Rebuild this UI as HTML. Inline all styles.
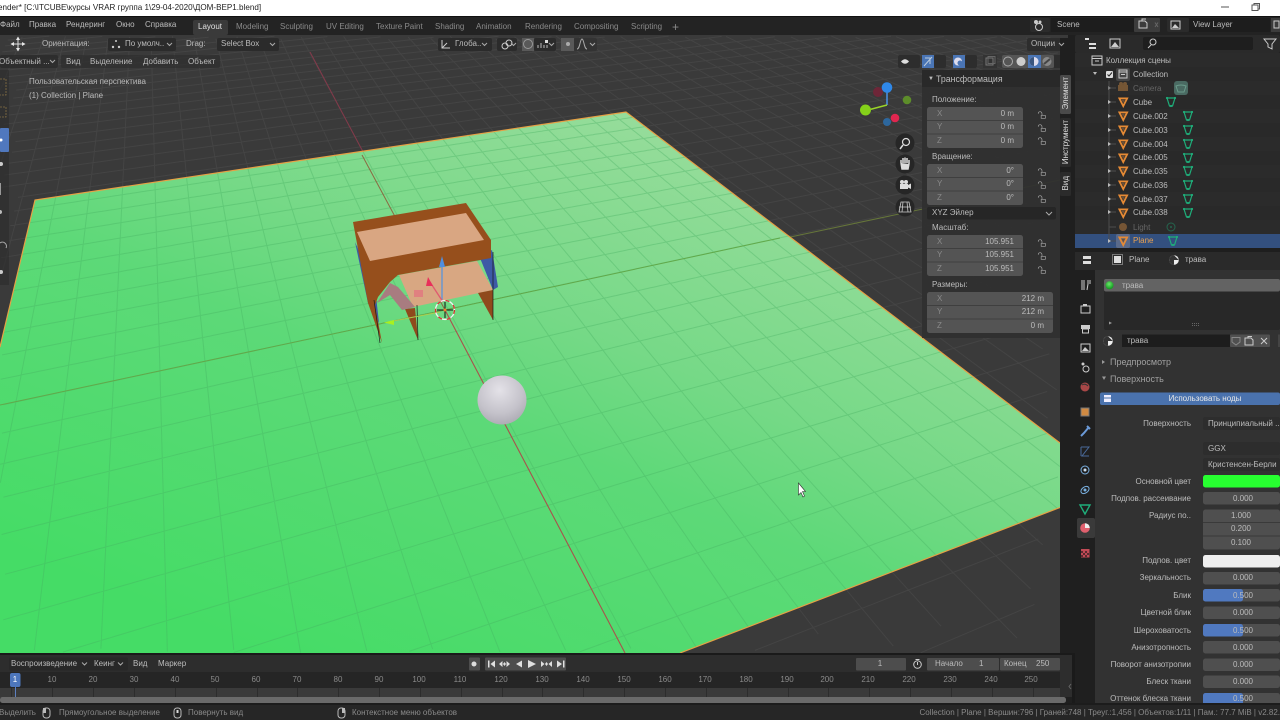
<!DOCTYPE html>
<html><head><meta charset="utf-8"><style>
html,body{margin:0;padding:0;background:#232323;width:1280px;height:720px;overflow:hidden}
svg{position:absolute;left:0;top:0}
#x{position:absolute;left:0;top:0;width:1280px;height:720px;overflow:hidden;font:8px "Liberation Sans","Noto Sans CJK SC",sans-serif;color:#bcbcbc;filter:blur(.3px)}
#x span{position:absolute;white-space:nowrap;line-height:0;height:0}
.d{color:#8a8a8a}.c{transform:translateX(-50%)}
#x .v{writing-mode:vertical-rl;transform:rotate(180deg);line-height:11px;height:auto}
</style></head><body>
<svg width="1280" height="720" viewBox="0 0 1280 720">
<defs>
<linearGradient id="pg" gradientUnits="userSpaceOnUse" x1="260" y1="650" x2="503" y2="69"><stop offset="0" stop-color="#45dc66"/><stop offset=".48" stop-color="#5dd978"/><stop offset=".67" stop-color="#76d987"/><stop offset="1" stop-color="#95dc9a"/></linearGradient>
<radialGradient id="sp" cx=".45" cy=".3" r=".8"><stop offset="0" stop-color="#e4e2e8"/><stop offset=".6" stop-color="#c4c2ca"/><stop offset="1" stop-color="#a5a3ac"/></radialGradient>
<radialGradient id="ball" cx=".45" cy=".35" r=".6"><stop offset="0" stop-color="#6be86a"/><stop offset="1" stop-color="#159c22"/></radialGradient>
<clipPath id="vp"><rect x="0" y="35" width="1060" height="618"/></clipPath>
<symbol id="tri" viewBox="0 0 12 12" overflow="visible"><path d="M1.500 1.500H10.500L6 10.500Z" fill="none" stroke="#e58a35" stroke-width="2"/><path d="M4 3.200H8L6 7.200Z" fill="#6b5038"/></symbol>
<symbol id="gt" viewBox="0 0 12 12" overflow="visible"><path d="M2 2H10L7.500 10H4.500Z" fill="none" stroke="#1fae7a" stroke-width="1.200"/><circle cx="2" cy="2" r="1.100" fill="#1fae7a"/><circle cx="10" cy="2" r="1.100" fill="#1fae7a"/><circle cx="6" cy="10" r="1.100" fill="#1fae7a"/></symbol>
<symbol id="lock" viewBox="0 0 12 12" overflow="visible"><path d="M1.500 4.500C1.500 1.500 5.500 1 6 4.500V6M5 6.500H10V10H5Z" fill="none" stroke="#a8a8a8" stroke-width=".8"/></symbol>
</defs>
<rect width="1280" height="720" fill="#1f1f1f"/>
<g clip-path="url(#vp)">
<rect x="0" y="35" width="1060" height="618" fill="#3a3a3a"/>
<g id="floor" fill="none" stroke="#444" stroke-width="1"></g>
<path d="M310 52L447 310" stroke="#84394a" stroke-width="1" fill="none"/>
<path d="M1060 180L445 310" stroke="#66763a" stroke-width="1" fill="none"/>
<path d="M35 200L626 112L1060 443V507.500L680 653H0V347Z" fill="url(#pg)"/>
<g id="plane" fill="none" stroke="#46b060" stroke-opacity=".36" stroke-width="1"></g>
<path d="M445 310L625 653" stroke="#a8524c" stroke-width="1.100"/>
<path d="M362 155L445 310" stroke="#8a6a42" stroke-width="1"/>
<path d="M0 405L445 310L780 238" stroke="#62a94a" stroke-width="1"/>
<path d="M0 347L35 200L626 112L1060 443M1060 507.500L680 653" fill="none" stroke="#e6a045" stroke-width="1.200"/>
<!-- house -->
<path d="M355 242L375 287L379 323L368 303Z" fill="#3d59a6"/>
<path d="M480 258L492 250L498 287L493 290Z" fill="#3d59a6"/>
<path d="M399 275L477 261L493 290L413 307Z" fill="#d8a782"/>
<path d="M478 293L493 290L493 320Z" fill="#8f4a1c"/>
<path d="M405 309L415 308L418 340Z" fill="#8f4a1c"/>
<path d="M377 303L390 283L398 287L415 307L402 310L390 295Z" fill="#a87c80"/>
<path d="M414 290H423V297H414Z" fill="#e08080"/>
<path d="M353 222L466 203L491 240V258L398 275L390 282L378 297L375 305L382 343L368 303Z" fill="#964f1c"/>
<path d="M357 232L466 213L484 240L370 261Z" fill="#d9a682"/>
<path d="M374 300L380 343M417 305L418 340M493 252V320" stroke="#1a1a1a" stroke-width=".7" fill="none"/>
<path d="M442 300V262" stroke="#5b95dc" stroke-width="1.300"/><path d="M442 256L445 267H439Z" fill="#4f8fe0"/>
<path d="M443 302L430 282" stroke="#e05a70" stroke-width="1.300"/><path d="M428 277L433 286L426 286Z" fill="#e8305a"/>
<path d="M440 312L388 322" stroke="#a9cf50" stroke-width="1"/><path d="M384 322.500L394 320L394 325Z" fill="#a8f020"/>
<circle cx="445" cy="310" r="9.500" fill="none" stroke="#f4f4f4" stroke-width="1.300"/><circle cx="445" cy="310" r="9.500" fill="none" stroke="#d83030" stroke-width="1.300" stroke-dasharray="4 5"/>
<path d="M445 302V318M437 310H453" stroke="#111" stroke-width="1"/><circle cx="445" cy="310" r="1.500" fill="#f08030"/>
<circle cx="502" cy="400" r="24.500" fill="url(#sp)"/>
<path d="M798.500 483L798.500 495L801 492.500L803 497L804.500 496L802.500 491.500L805.500 491.500Z" fill="#fff" stroke="#333" stroke-width=".6"/>
<!-- left tool strip -->
<rect x="0" y="70" width="9" height="215" fill="#2a2a2a" opacity=".55"/>
<rect x="0" y="128" width="9" height="24" rx="1" fill="#5078be"/>
<path d="M0 79H6V95H0M0 107H6V117H0" fill="none" stroke="#c09a50" stroke-width=".8" opacity=".6" stroke-dasharray="2 1"/>
<circle cx="1" cy="140" r="1.500" fill="#fff"/><circle cx="1" cy="164" r="2" fill="#ccc"/><rect x="0" y="183" width="1" height="12" fill="#999"/><circle cx="0" cy="212" r="2" fill="#bbb"/><path d="M0 243A4 4 0 0 1 6 248" stroke="#aaa" fill="none"/><circle cx="1" cy="272" r="2" fill="#ccc"/>
<!-- tool header -->
<rect x="108" y="38" width="68" height="13" rx="2" fill="#2b2b2b"/><rect x="217" y="38" width="62" height="13" rx="2" fill="#2b2b2b"/>
<rect x="0" y="55" width="58" height="13" rx="2" fill="#2b2b2b" opacity=".8"/><rect x="61" y="55" width="159" height="13" rx="2" fill="#2f2f2f" opacity=".75"/>
<rect x="438" y="38" width="54" height="13" rx="2" fill="#2b2b2b"/><rect x="497" y="38" width="20" height="13" rx="2" fill="#2b2b2b"/><rect x="522" y="38" width="12" height="13" fill="#595959"/><rect x="534" y="38" width="22" height="13" rx="2" fill="#2b2b2b"/><rect x="561" y="38" width="13" height="13" fill="#595959"/><rect x="574" y="38" width="23" height="13" rx="2" fill="#333"/>
<path d="M18 37V51M11 44H25" stroke="#ddd" stroke-width="1"/><path d="M18 36.500L20 40H16ZM18 51.500L20 48H16ZM10.500 44L14 42V46ZM25.500 44L22 42V46Z" fill="#e6e6e6"/>
<circle cx="116" cy="41" r="1" fill="#ccc"/><circle cx="113" cy="47" r="1.200" fill="#ccc"/><circle cx="119" cy="47" r="1.200" fill="#ccc"/>
<path d="M442 40V48H450M442 48L447 43" stroke="#ccc" fill="none"/><circle cx="505" cy="46" r="3" fill="none" stroke="#ccc"/><circle cx="509" cy="43" r="3" fill="none" stroke="#ccc"/>
<circle cx="528" cy="44" r="4.500" fill="none" stroke="#999"/><path d="M538 48V45M541 48V43M544 48V45M547 48V45" stroke="#bbb"/><rect x="545" y="40" width="3" height="3" fill="#ddd"/>
<circle cx="568" cy="44" r="2" fill="#aaa"/><path d="M577 49C580 49 580 39 582 39S584 49 587 49" stroke="#aaa" fill="none"/>
<rect x="1027" y="38" width="41" height="13" rx="2" fill="#2d2d2d"/>
<path d="M167 43L169.500 45.500L172 43M270 43L272.500 45.500L275 43M482 43L484.500 45.500L487 43M511 43L513.500 45.500L516 43M549 43L551.500 45.500L554 43M590 43L592.500 45.500L595 43M50 60L52.500 62.500L55 60M910 60L912.500 62.500L915 60M939 60L941.500 62.500L944 60M969 60L971.500 62.500L974 60" fill="none" stroke="#aaa" stroke-width="1"/>
<!-- overlay header -->
<rect x="898" y="55" width="22" height="13" rx="2" fill="#2d2d2d"/><rect x="922" y="55" width="12" height="13" fill="#4a75b5"/><rect x="934" y="55" width="12" height="13" rx="2" fill="#2d2d2d"/><rect x="953" y="55" width="12" height="13" fill="#4a75b5"/><rect x="965" y="55" width="12" height="13" rx="2" fill="#2d2d2d"/><rect x="983" y="55" width="14" height="13" fill="#333"/><rect x="1002" y="55" width="52" height="13" rx="2" fill="#555"/><rect x="1028" y="55" width="13" height="13" fill="#4a75b5"/><rect x="1054" y="55" width="6" height="13" fill="#2d2d2d"/>
<path d="M901 61.500Q905 57 909 61.500Q905 66 901 61.500Z" fill="#ddd"/>
<path d="M924 66L932 57M925 58H930V64" stroke="#bcd" fill="none"/><circle cx="958" cy="61.500" r="4" fill="#dde"/><circle cx="960" cy="63" r="2.500" fill="#4a75b5"/>
<rect x="986" y="58" width="7" height="7" fill="none" stroke="#777"/><rect x="988" y="56.500" width="7" height="7" fill="none" stroke="#666"/>
<circle cx="1008" cy="61.500" r="4.500" fill="#555" stroke="#aaa"/><circle cx="1021" cy="61.500" r="4.500" fill="#ccc"/><circle cx="1034" cy="61.500" r="4.500" fill="#dde"/><path d="M1034 57A4.500 4.500 0 0 0 1034 66Z" fill="#39557f"/><circle cx="1047" cy="61.500" r="4.500" fill="#888"/><path d="M1044 64L1050 59" stroke="#444" stroke-width="2"/>
<!-- nav gizmo -->
<path d="M887 105V90" stroke="#4a92e8" stroke-width="1.500"/><path d="M887 105L868 110" stroke="#9ad428" stroke-width="1.500"/>
<circle cx="878" cy="92" r="5" fill="#6e2638"/><circle cx="887" cy="87.500" r="5.300" fill="#2f88e8"/><circle cx="865.500" cy="110" r="5.500" fill="#85d11a"/><circle cx="907" cy="100" r="4.300" fill="#5d8d2a"/><circle cx="895" cy="118" r="4.300" fill="#e0264f"/><circle cx="887" cy="122" r="4" fill="#2d679d"/>
<g fill="#262626"><circle cx="905" cy="143" r="9.500"/><circle cx="905" cy="164" r="9.500"/><circle cx="905" cy="185" r="9.500"/><circle cx="905" cy="207" r="9.500"/></g>
<circle cx="906" cy="142" r="3.500" fill="none" stroke="#ddd" stroke-width="1.200"/><path d="M903 145L900 149" stroke="#ddd" stroke-width="1.500"/>
<path d="M901 163V160M903 163V158M905 163V157.500M907 163V158M909 164V160M901 163L902 169H908L909 164" stroke="#ddd" stroke-width="1.500" fill="#ddd"/>
<rect x="900" y="184" width="8" height="5" fill="#ddd"/><circle cx="902" cy="182" r="2" fill="#ddd"/><circle cx="906" cy="182" r="2" fill="#ddd"/><path d="M908 185L911 183.500V189L908 187.500Z" fill="#ddd"/>
<path d="M901 202H909L911 212H899ZM899 207H911M903 202L902 212M907 202L908 212" fill="none" stroke="#ccc" stroke-width=".8"/>
<!-- N panel -->
<rect x="922" y="70" width="138" height="268" fill="#2f2f2f" opacity=".93"/>
<rect x="922" y="70" width="138" height="17" fill="#292929"/>
</g>
<g fill="#545454">
<rect x="927" y="107" width="96" height="41" rx="2.500"/><rect x="927" y="164" width="96" height="41" rx="2.500"/><rect x="927" y="235" width="96" height="41" rx="2.500"/><rect x="927" y="292" width="126" height="41" rx="2.500"/>
</g>
<path d="M927 120.500H1023M927 134H1023M927 177.500H1023M927 191H1023M927 248.500H1023M927 262H1023M927 305.500H1053M927 319H1053" stroke="#3f3f3f" stroke-width="1"/>
<rect x="927" y="207" width="129" height="12.500" rx="2" fill="#262626"/>
<path d="M1046 212L1049 215L1052 212" fill="none" stroke="#aaa"/>
<g><use href="#lock" x="1037" y="110" width="10" height="10"/><use href="#lock" x="1037" y="123" width="10" height="10"/><use href="#lock" x="1037" y="136" width="10" height="10"/><use href="#lock" x="1037" y="167" width="10" height="10"/><use href="#lock" x="1037" y="180" width="10" height="10"/><use href="#lock" x="1037" y="194" width="10" height="10"/><use href="#lock" x="1037" y="238" width="10" height="10"/><use href="#lock" x="1037" y="251" width="10" height="10"/><use href="#lock" x="1037" y="265" width="10" height="10"/></g>
<!-- N tabs -->
<rect x="1060" y="53" width="12" height="600" fill="#1f1f1f"/>
<rect x="1060" y="75" width="11" height="39" rx="1.500" fill="#4a4a4a"/><rect x="1060" y="118" width="11" height="49" rx="1.500" fill="#2b2b2b"/><rect x="1060" y="172" width="11" height="24" rx="1.500" fill="#2b2b2b"/>
<path d="M1059 43L1061.500 45.500L1064 43" fill="none" stroke="#aaa" stroke-width="1"/>
<rect x="1060" y="35" width="12" height="3" fill="#3a3a3a"/><rect x="1068" y="35" width="7" height="18" fill="#1f1f1f"/>
<!-- top -->
<rect x="0" y="0" width="1280" height="16" fill="#fff"/><rect x="0" y="16" width="1280" height="1" fill="#111"/>
<rect x="0" y="17" width="1280" height="18" fill="#232323"/>
<rect x="193" y="20" width="35" height="15" rx="2" fill="#3a3a3a"/>
<path d="M1221 7H1229" stroke="#555"/><path d="M1252 5H1258V10.500H1252ZM1254 5V3.500H1259.500V9H1258" fill="none" stroke="#555"/>
<rect x="1030" y="18" width="20" height="14" rx="2" fill="#2b2b2b"/><rect x="1051" y="18" width="83" height="14" fill="#1d1d1d"/><rect x="1134" y="18" width="26" height="14" rx="1" fill="#3c3c3c"/><rect x="1167" y="18" width="22" height="14" rx="2" fill="#2b2b2b"/><rect x="1189" y="18" width="81" height="14" fill="#1d1d1d"/><rect x="1271" y="18" width="9" height="14" fill="#3c3c3c"/>
<circle cx="1039" cy="27" r="3.500" fill="none" stroke="#ccc"/><circle cx="1036" cy="22" r="2" fill="#ccc"/><circle cx="1040" cy="22" r="1.500" fill="#ccc"/>
<path d="M1139 21H1145L1147 23V28H1139ZM1142 21V19H1146" fill="none" stroke="#ccc"/><path d="M1155 22.500L1158 27M1158 22.500L1155 27" stroke="#666"/>
<rect x="1171" y="21" width="9" height="8" fill="none" stroke="#ccc"/><path d="M1172 28L1175 24L1179 28Z" fill="#ccc"/><path d="M1274 21H1279V28H1274Z" fill="none" stroke="#ccc"/>
<!-- outliner -->
<rect x="1075" y="35" width="205" height="18" fill="#2a2a2a" rx="2"/>
<rect x="1075" y="53" width="205" height="195" fill="#2b2b2b"/>
<g fill="#292929"><rect x="1075" y="67" width="205" height="14"/><rect x="1075" y="95" width="205" height="14"/><rect x="1075" y="123" width="205" height="14"/><rect x="1075" y="151" width="205" height="14"/><rect x="1075" y="178" width="205" height="14"/><rect x="1075" y="206" width="205" height="14"/></g>
<rect x="1075" y="234" width="205" height="14" fill="#33507f"/>
<rect x="1143" y="37" width="110" height="13" rx="2" fill="#1e1e1e"/>
<path d="M1085 38H1089V40H1085ZM1089 43H1096V45H1089ZM1089 47H1096V49H1089" fill="#ddd"/><rect x="1110" y="39" width="10" height="9" fill="none" stroke="#ccc"/><path d="M1111 47L1115 42L1119 47Z" fill="#ccc"/>
<circle cx="1153" cy="42" r="3" fill="none" stroke="#ccc"/><path d="M1151 45L1148 48" stroke="#ccc"/><path d="M1264 39H1276L1272 44V49L1268 47V44Z" fill="none" stroke="#ccc"/>
<rect x="1092" y="56" width="10" height="9" fill="none" stroke="#ccc"/><path d="M1092 58.500H1102M1095 61H1099" stroke="#ccc"/>
<path d="M1095 73L1099 73L1097 76Z" fill="#bbb" transform="translate(-2 -1)"/><rect x="1106" y="71" width="7" height="7" rx="1" fill="#ddd"/><path d="M1107.500 74.500L1109 76L1112 72.500" stroke="#222" fill="none"/>
<rect x="1116" y="68" width="14" height="13" rx="2" fill="#444"/><rect x="1119" y="70" width="8" height="8" fill="none" stroke="#ccc"/><path d="M1119 72H1127M1121 74.500H1125" stroke="#ccc"/>
<path d="M1109 81V241M1109 88H1116M1109 102H1116M1109 116H1116M1109 130H1116M1109 144H1116M1109 157H1116M1109 171H1116M1109 185H1116M1109 199H1116M1109 212H1116M1109 227H1116M1109 241H1116" stroke="#4d4d4d" stroke-width="1"/>
<g fill="#bbb"><path d="M1108 100L1111 102L1108 104Z"/><path d="M1108 114L1111 116L1108 118Z"/><path d="M1108 128L1111 130L1108 132Z"/><path d="M1108 142L1111 144L1108 146Z"/><path d="M1108 155L1111 157L1108 159Z"/><path d="M1108 169L1111 171L1108 173Z"/><path d="M1108 183L1111 185L1108 187Z"/><path d="M1108 197L1111 199L1108 201Z"/><path d="M1108 210L1111 212L1108 214Z"/><path d="M1108 239L1111 241L1108 243Z"/><path d="M1108 86L1111 88L1108 90Z" opacity=".5"/></g>
<g opacity=".45"><rect x="1118" y="85" width="10" height="6" fill="#d08a42"/><circle cx="1121" cy="84" r="2" fill="#d08a42"/><circle cx="1125" cy="84" r="2" fill="#d08a42"/></g>
<rect x="1174" y="81" width="14" height="14" rx="3" fill="#4a6a62"/><path d="M1176 86Q1181 84 1186 86L1184 92H1178Z" fill="none" stroke="#6a9a8a"/>
<g><use href="#tri" x="1118" y="97" width="10.500" height="10.500"/><use href="#tri" x="1118" y="111" width="10.500" height="10.500"/><use href="#tri" x="1118" y="125" width="10.500" height="10.500"/><use href="#tri" x="1118" y="139" width="10.500" height="10.500"/><use href="#tri" x="1118" y="153" width="10.500" height="10.500"/><use href="#tri" x="1118" y="166" width="10.500" height="10.500"/><use href="#tri" x="1118" y="180" width="10.500" height="10.500"/><use href="#tri" x="1118" y="194" width="10.500" height="10.500"/><use href="#tri" x="1118" y="208" width="10.500" height="10.500"/></g>
<rect x="1116" y="234" width="14" height="14" rx="2" fill="#5a6a8a"/><use href="#tri" x="1118" y="236" width="10.500" height="10.500"/>
<circle cx="1123" cy="227" r="4" fill="#d08a42" opacity=".45"/><circle cx="1171" cy="227" r="4" fill="none" stroke="#1fae7a" opacity=".45"/><circle cx="1171" cy="227" r="1" fill="#1fae7a" opacity=".45"/>
<g><use href="#gt" x="1165" y="96" width="12" height="12"/><use href="#gt" x="1182" y="110" width="12" height="12"/><use href="#gt" x="1182" y="124" width="12" height="12"/><use href="#gt" x="1182" y="138" width="12" height="12"/><use href="#gt" x="1182" y="152" width="12" height="12"/><use href="#gt" x="1182" y="165" width="12" height="12"/><use href="#gt" x="1182" y="179" width="12" height="12"/><use href="#gt" x="1182" y="193" width="12" height="12"/><use href="#gt" x="1182" y="207" width="12" height="12"/><use href="#gt" x="1167" y="235" width="12" height="12"/></g>
<rect x="1075" y="248" width="205" height="4" fill="#1e1e1e"/>
<!-- properties -->
<rect x="1075" y="252" width="205" height="18" fill="#2a2a2a"/>
<rect x="1075" y="270" width="20" height="435" fill="#1f1f1f"/>
<rect x="1095" y="270" width="185" height="435" fill="#323232"/>
<path d="M1083 256H1091V259H1083ZM1083 261H1091V264H1083Z" fill="#ddd"/>
<rect x="1114" y="256" width="7" height="7" fill="#ddd"/><rect x="1112.500" y="254.500" width="10" height="10" fill="none" stroke="#777"/>
<circle cx="1174" cy="260" r="4.800" fill="#eee"/><path d="M1174 255.200A4.800 4.800 0 0 0 1174 264.800L1174 260L1178.800 260Z" fill="#333"/>
<rect x="1104" y="279" width="176" height="51" rx="2" fill="#282828"/>
<rect x="1104" y="279" width="176" height="12.500" rx="2" fill="#636363"/>
<circle cx="1109.500" cy="285.300" r="4" fill="url(#ball)"/>
<path d="M1109 321.500L1112 323L1109 324.500Z" fill="#999"/><path d="M1192 323.500H1200M1192 325.500H1200" stroke="#666" stroke-dasharray="1 1"/>
<circle cx="1108" cy="341" r="4.800" fill="#eee"/><path d="M1108 336.200A4.800 4.800 0 0 0 1108 345.800L1108 341L1112.800 341Z" fill="#333"/>
<rect x="1122" y="334.500" width="108" height="12.500" fill="#1d1d1d"/><rect x="1230" y="334.500" width="40" height="12.500" rx="1" fill="#505050"/><rect x="1278" y="334.500" width="2" height="12.500" fill="#444"/>
<path d="M1232 337.500H1240V342L1236 345L1232 342Z" fill="none" stroke="#888"/><path d="M1245 338H1251L1253 340V345H1245ZM1248 338V336.500H1252" fill="none" stroke="#ccc"/><path d="M1261 338L1267 344M1267 338L1261 344" stroke="#ccc"/>
<path d="M1102 360L1105 362L1102 364Z" fill="#999"/><path d="M1102 376.500L1106 376.500L1104 380Z" fill="#999"/>
<rect x="1100" y="392.500" width="180" height="12.500" rx="2" fill="#4a72ad"/><rect x="1104" y="395" width="7" height="7" fill="#eef"/><path d="M1104 398H1111" stroke="#4a72ad"/>
<g fill="#2d2d2d"><rect x="1203" y="417" width="77" height="13" rx="2"/><rect x="1203" y="442" width="77" height="13" rx="2"/><rect x="1203" y="458" width="77" height="13" rx="2"/></g>
<rect x="1203" y="475" width="77" height="12.500" rx="2.500" fill="#27ff30"/>
<g fill="#4f4f4f"><rect x="1203" y="492" width="77" height="12.500" rx="2.500"/><rect x="1203" y="509.500" width="77" height="40" rx="2.500"/><rect x="1203" y="572" width="77" height="12.500" rx="2.500"/><rect x="1203" y="589" width="77" height="12.500" rx="2.500"/><rect x="1203" y="606.500" width="77" height="12.500" rx="2.500"/><rect x="1203" y="624" width="77" height="12.500" rx="2.500"/><rect x="1203" y="641" width="77" height="12.500" rx="2.500"/><rect x="1203" y="658.500" width="77" height="12.500" rx="2.500"/><rect x="1203" y="675.500" width="77" height="12.500" rx="2.500"/><rect x="1203" y="693" width="77" height="12" rx="2.500"/></g>
<path d="M1203 522.500H1280M1203 536H1280" stroke="#3a3a3a"/>
<rect x="1203" y="555" width="77" height="12.500" rx="2.500" fill="#eee"/>
<g fill="#5079c0"><rect x="1203" y="589" width="40" height="12.500" rx="2.500"/><rect x="1203" y="624" width="40" height="12.500" rx="2.500"/><rect x="1203" y="693" width="40" height="12" rx="2.500"/></g>
<!-- prop tabs -->
<rect x="1077" y="518" width="18" height="20" rx="2" fill="#3a3a3a"/>
<path d="M1082 280V290M1084 280V290M1088 280V284L1087 290M1090 280V284" stroke="#ccc" fill="none"/>
<rect x="1081" y="306" width="9" height="7" fill="none" stroke="#ccc"/><rect x="1083" y="304" width="4" height="2" fill="#ccc"/>
<rect x="1081" y="325" width="9" height="4" fill="#ccc"/><rect x="1082.500" y="329" width="6" height="4" fill="none" stroke="#ccc"/>
<rect x="1081" y="344" width="9" height="8" fill="none" stroke="#ccc"/><path d="M1082 351L1085 347L1089 351Z" fill="#ccc"/>
<circle cx="1086" cy="369" r="3" fill="none" stroke="#ccc"/><circle cx="1083" cy="364" r="1.500" fill="#ccc"/>
<circle cx="1085" cy="387" r="4.500" fill="#a84747"/><path d="M1082 385Q1085 383 1088 386" stroke="#333" fill="none"/>
<rect x="1081" y="408" width="8" height="8" fill="#d08a42" stroke="#777"/>
<path d="M1089 427L1084 433L1081 436M1087 426L1090 429" stroke="#6b9ad8" stroke-width="2" fill="none"/>
<path d="M1081 447L1089 447L1082 456L1089 456M1081 447V456" stroke="#4a6a9a" fill="none"/>
<circle cx="1085" cy="470" r="4" fill="none" stroke="#7ab0e0"/><circle cx="1085" cy="470" r="1.500" fill="#cde"/>
<ellipse cx="1085" cy="490" rx="4.500" ry="3" fill="none" stroke="#7ab0e0" transform="rotate(-35 1085 490)"/><circle cx="1085" cy="490" r="1.500" fill="#7ab0e0"/>
<path d="M1080 505H1090L1085 514Z" fill="none" stroke="#1fae7a" stroke-width="1.400"/>
<circle cx="1085" cy="528" r="4.800" fill="#e0606e"/><path d="M1085 523.200A4.800 4.800 0 0 1 1089.800 528L1085 528Z" fill="#eee"/>
<rect x="1081" y="549" width="8.500" height="8.500" fill="#c04a55"/><path d="M1081 551H1083V553H1081ZM1085 551H1087V553H1085ZM1083 553H1085V555H1083ZM1087 553H1089V555H1087ZM1081 555H1083V557H1081ZM1085 555H1087V557H1085Z" fill="#5a2a30"/>
<!-- timeline -->
<rect x="0" y="653" width="1072" height="2" fill="#1a1a1a"/>
<rect x="0" y="655" width="1060" height="17" fill="#2d2d2d"/><rect x="0" y="672" width="1060" height="16" fill="#252525"/><rect x="0" y="688" width="1060" height="10" fill="#3a3a3a"/>
<rect x="0" y="697" width="1066" height="6" rx="2.500" fill="#6a6a6a"/>
<rect x="1060" y="655" width="12" height="42" fill="#2d2d2d"/>
<rect x="1072" y="653" width="3" height="52" fill="#1a1a1a"/>
<path d="M1071 684L1069 686.500L1071 689" stroke="#666" fill="none"/>
<rect x="9" y="657.500" width="119" height="13" rx="2" fill="#282828"/>
<path d="M82 662.500L84.500 665L87 662.500M118 662.500L120.500 665L123 662.500" fill="none" stroke="#aaa"/>
<rect x="469" y="657.500" width="11" height="13" rx="1" fill="#4d4d4d"/><rect x="485" y="657.500" width="81" height="13" rx="1" fill="#4d4d4d"/>
<circle cx="474" cy="664" r="2.500" fill="#ddd"/>
<g fill="#e0e0e0"><path d="M488 660.500H489.500V667.500H488ZM495 660.500V667.500L490.500 664Z"/><path d="M499 664L502.500 661V667ZM510 664L506.500 661V667ZM503 664L504.500 662L506 664L504.500 666Z"/><path d="M522 660.500V667.500L516 664Z"/><path d="M528 660V668L536 664Z"/><path d="M541 661V667L544.500 664ZM552 661V667L548.500 664ZM545 664L546.500 662L548 664L546.500 666Z"/><path d="M557 660.500V667.500L562 664ZM563 660.500H564.500V667.500H563Z"/></g>
<rect x="856" y="658" width="50" height="12.500" rx="1" fill="#4d4d4d"/><rect x="927" y="658" width="72" height="12.500" rx="1" fill="#4d4d4d"/><rect x="1000" y="658" width="60" height="12.500" rx="1" fill="#4d4d4d"/>
<circle cx="917.500" cy="664.500" r="3.800" fill="none" stroke="#ccc"/><path d="M915.500 659.500H919.500M917.500 662V665" stroke="#ccc"/>
<path id="tk" d="" stroke="#2c2c2c" stroke-width="1"/>
<rect x="10" y="673" width="10.500" height="14" rx="2" fill="#4d76bb"/><path d="M15.500 687V697" stroke="#5d80c0" stroke-width="1"/>
<rect x="0" y="703" width="1280" height="2" fill="#1c1c1c"/>
<rect x="0" y="705" width="1280" height="15" fill="#262626"/>
<rect x="43" y="708" width="7" height="10" rx="3" fill="none" stroke="#bbb"/><rect x="174" y="708" width="7" height="10" rx="3" fill="none" stroke="#bbb"/><rect x="338" y="708" width="7" height="10" rx="3" fill="none" stroke="#bbb"/>
<rect x="176.500" y="710" width="2" height="3" fill="#ddd"/><rect x="43" y="708" width="3" height="5" fill="#bbb"/><rect x="342" y="708" width="3" height="5" fill="#bbb"/>
</svg>
<div id="x">
<span style="left:-2px;top:8px;color:#222;font-size:8.100px">ender* [C:\ITCUBE\курсы VRAR группа 1\29-04-2020\ДОМ-ВЕР1.blend]</span>
<span style="left:0;top:25px">Файл</span><span style="left:29px;top:25px">Правка</span><span style="left:66px;top:25px">Рендеринг</span><span style="left:116px;top:25px">Окно</span><span style="left:145px;top:25px">Справка</span>
<span style="left:198px;top:27px;color:#e0e0e0">Layout</span><span class="d" style="left:236px;top:27px">Modeling</span><span class="d" style="left:280px;top:27px">Sculpting</span><span class="d" style="left:326px;top:27px">UV Editing</span><span class="d" style="left:376px;top:27px">Texture Paint</span><span class="d" style="left:435px;top:27px">Shading</span><span class="d" style="left:476px;top:27px">Animation</span><span class="d" style="left:525px;top:27px">Rendering</span><span class="d" style="left:574px;top:27px">Compositing</span><span class="d" style="left:631px;top:27px">Scripting</span><span class="d" style="left:672px;top:27px;font-size:12px">+</span>
<span style="left:1057px;top:25px">Scene</span><span style="left:1193px;top:25px">View Layer</span>
<span style="left:42px;top:44px">Ориентация:</span><span style="left:125px;top:44px">По умолч..</span><span style="left:186px;top:44px">Drag:</span><span style="left:221px;top:44px">Select Box</span><span style="left:455px;top:44px">Глоба..</span><span style="left:1031px;top:44px">Опции</span>
<span style="left:-1px;top:62px">Объектный ...</span><span style="left:66px;top:62px">Вид</span><span style="left:90px;top:62px">Выделение</span><span style="left:143px;top:62px">Добавить</span><span style="left:188px;top:62px">Объект</span>
<span style="left:29px;top:82px">Пользовательская перспектива</span><span style="left:29px;top:96px">(1) Collection | Plane</span>
<span style="left:936px;top:79px;font-size:8.800px">Трансформация</span><span style="left:928px;top:79px;font-size:6px">▼</span>
<span style="left:932px;top:100px">Положение:</span><span style="left:932px;top:157px">Вращение:</span><span style="left:932px;top:213px">XYZ Эйлер</span><span style="left:932px;top:228px">Масштаб:</span><span style="left:932px;top:285px">Размеры:</span>
<span class="d" style="left:937px;top:114px">X</span><span class="d" style="left:937px;top:127px">Y</span><span class="d" style="left:937px;top:141px">Z</span><span class="d" style="left:937px;top:171px">X</span><span class="d" style="left:937px;top:184px">Y</span><span class="d" style="left:937px;top:198px">Z</span><span class="d" style="left:937px;top:242px">X</span><span class="d" style="left:937px;top:255px">Y</span><span class="d" style="left:937px;top:269px">Z</span><span class="d" style="left:937px;top:299px">X</span><span class="d" style="left:937px;top:312px">Y</span><span class="d" style="left:937px;top:326px">Z</span>
<span style="right:266px;top:114px">0 m</span><span style="right:266px;top:127px">0 m</span><span style="right:266px;top:141px">0 m</span><span style="right:266px;top:171px">0°</span><span style="right:266px;top:184px">0°</span><span style="right:266px;top:198px">0°</span><span style="right:266px;top:242px">105.951</span><span style="right:266px;top:255px">105.951</span><span style="right:266px;top:269px">105.951</span><span style="right:236px;top:299px">212 m</span><span style="right:236px;top:312px">212 m</span><span style="right:236px;top:326px">0 m</span>
<span class="v" style="left:1060px;top:77px;color:#ddd">Элемент</span><span class="v" style="left:1060px;top:120px;color:#ddd">Инструмент</span><span class="v" style="left:1060px;top:176px;color:#ddd">Вид</span>
<span style="left:1106px;top:61px">Коллекция сцены</span><span style="left:1133px;top:75px">Collection</span><span style="left:1133px;top:89px;color:#666">Camera</span><span style="left:1133px;top:103px">Cube</span><span style="left:1133px;top:117px">Cube.002</span><span style="left:1133px;top:131px">Cube.003</span><span style="left:1133px;top:145px">Cube.004</span><span style="left:1133px;top:158px">Cube.005</span><span style="left:1133px;top:172px">Cube.035</span><span style="left:1133px;top:186px">Cube.036</span><span style="left:1133px;top:200px">Cube.037</span><span style="left:1133px;top:213px">Cube.038</span><span style="left:1133px;top:228px;color:#666">Light</span><span style="left:1133px;top:241px;color:#e8a050">Plane</span>
<span style="left:1129px;top:260px">Plane</span><span style="left:1185px;top:260px">трава</span>
<span style="left:1122px;top:286px">трава</span><span style="left:1127px;top:341px">трава</span>
<span style="left:1110px;top:362px;font-size:9px;color:#a0a0a0">Предпросмотр</span><span style="left:1110px;top:379px;font-size:9px;color:#a0a0a0">Поверхность</span>
<span class="c" style="left:1205px;top:399px;color:#e8e8e8">Использовать ноды</span>
<span style="right:89px;top:424px">Поверхность</span><span style="left:1208px;top:424px">Принципиальный ..</span><span style="left:1208px;top:449px">GGX</span><span style="left:1208px;top:465px">Кристенсен-Берли</span>
<span style="right:89px;top:482px">Основной цвет</span><span style="right:89px;top:499px">Подпов. рассеивание</span><span style="right:89px;top:516px">Радиус по..</span><span style="right:89px;top:561px">Подпов. цвет</span><span style="right:89px;top:578px">Зеркальность</span><span style="right:89px;top:596px">Блик</span><span style="right:89px;top:613px">Цветной блик</span><span style="right:89px;top:631px">Шероховатость</span><span style="right:89px;top:648px">Анизотропность</span><span style="right:89px;top:665px">Поворот анизотропии</span><span style="right:89px;top:682px">Блеск ткани</span><span style="right:89px;top:699px">Оттенок блеска ткани</span>
<span class="c" style="left:1243px;top:499px">0.000</span><span class="c" style="left:1241px;top:516px">1.000</span><span class="c" style="left:1241px;top:529px">0.200</span><span class="c" style="left:1241px;top:543px">0.100</span><span class="c" style="left:1243px;top:578px">0.000</span><span class="c" style="left:1243px;top:596px">0.500</span><span class="c" style="left:1243px;top:613px">0.000</span><span class="c" style="left:1243px;top:631px">0.500</span><span class="c" style="left:1243px;top:648px">0.000</span><span class="c" style="left:1243px;top:665px">0.000</span><span class="c" style="left:1243px;top:682px">0.000</span><span class="c" style="left:1243px;top:699px">0.500</span>
<span style="left:11px;top:664px">Воспроизведение</span><span style="left:94px;top:664px">Кеинг</span><span style="left:133px;top:664px">Вид</span><span style="left:158px;top:664px">Маркер</span>
<span class="c" style="left:880px;top:664px">1</span><span style="left:935px;top:664px">Начало</span><span style="left:979px;top:664px">1</span><span style="left:1004px;top:664px">Конец</span><span style="left:1036px;top:664px">250</span>
<span class="c" style="left:15px;top:680px;color:#fff">1</span><span class="c d" style="left:52px;top:680px">10</span><span class="c d" style="left:93px;top:680px">20</span><span class="c d" style="left:134px;top:680px">30</span><span class="c d" style="left:175px;top:680px">40</span><span class="c d" style="left:215px;top:680px">50</span><span class="c d" style="left:256px;top:680px">60</span><span class="c d" style="left:297px;top:680px">70</span><span class="c d" style="left:338px;top:680px">80</span><span class="c d" style="left:379px;top:680px">90</span><span class="c d" style="left:419px;top:680px">100</span><span class="c d" style="left:460px;top:680px">110</span><span class="c d" style="left:501px;top:680px">120</span><span class="c d" style="left:542px;top:680px">130</span><span class="c d" style="left:583px;top:680px">140</span><span class="c d" style="left:624px;top:680px">150</span><span class="c d" style="left:665px;top:680px">160</span><span class="c d" style="left:705px;top:680px">170</span><span class="c d" style="left:746px;top:680px">180</span><span class="c d" style="left:787px;top:680px">190</span><span class="c d" style="left:827px;top:680px">200</span><span class="c d" style="left:868px;top:680px">210</span><span class="c d" style="left:909px;top:680px">220</span><span class="c d" style="left:950px;top:680px">230</span><span class="c d" style="left:991px;top:680px">240</span><span class="c d" style="left:1031px;top:680px">250</span>
<span class="d" style="left:-1px;top:713px">Выделить</span><span class="d" style="left:59px;top:713px">Прямоугольное выделение</span><span class="d" style="left:188px;top:713px">Повернуть вид</span><span class="d" style="left:352px;top:713px">Контекстное меню объектов</span>
<span class="d" style="right:0;top:713px">Collection | Plane | Вершин:796 | Граней:748 | Треуг.:1,456 | Объектов:1/11 | Пам.: 77.7 MiB | v2.82.</span>
</div>
<script>
(function(){
var p=[[35,200],[626,112],[1117,486],[-148,969]];
var x0=p[0][0],y0=p[0][1],x1=p[1][0],y1=p[1][1],x2=p[2][0],y2=p[2][1],x3=p[3][0],y3=p[3][1];
var dx1=x1-x2,dx2=x3-x2,dx3=x0-x1+x2-x3,dy1=y1-y2,dy2=y3-y2,dy3=y0-y1+y2-y3;
var den=dx1*dy2-dx2*dy1,g=(dx3*dy2-dx2*dy3)/den,h=(dx1*dy3-dx3*dy1)/den;
var a=x1-x0+g*x1,b=x3-x0+h*x3,c=x0,d=y1-y0+g*y1,e=y3-y0+h*y3,f=y0;
function P(u,v){var w=g*u+h*v+1;if(w<0.25)return null;var X=(a*u+b*v+c)/w,Y=(d*u+e*v+f)/w;if(X<0||X>1060||Y<36||Y>653)return null;return [X,Y];}
function seg(u0,v0,u1,v1){var s='',pen=false;for(var i=0;i<=240;i++){var t=i/240,q=P(u0+(u1-u0)*t,v0+(v1-v0)*t);if(!q){pen=false;continue;}s+=(pen?'L':'M')+q[0].toFixed(1)+' '+q[1].toFixed(1);pen=true;}return s;}
var fl='',pl='',st=10/212;
for(var k=-50;k<=50;k++){var t=.5+k*st;fl+=seg(t,-3,t,4)+seg(-3,t,4,t);if(t>=0&&t<=1){pl+=seg(t,0,t,1)+seg(0,t,1,t);}}
var P1=document.createElementNS('http://www.w3.org/2000/svg','path');P1.setAttribute('d',fl);document.getElementById('floor').appendChild(P1);
var P2=document.createElementNS('http://www.w3.org/2000/svg','path');P2.setAttribute('d',pl);document.getElementById('plane').appendChild(P2);
var s='';for(var n=0;n<=25;n++){var x=Math.round(11.4+n*40.85)+.5;s+='M'+x+' 688V697';}document.getElementById('tk').setAttribute('d',s);
})();
</script>
</body></html>
